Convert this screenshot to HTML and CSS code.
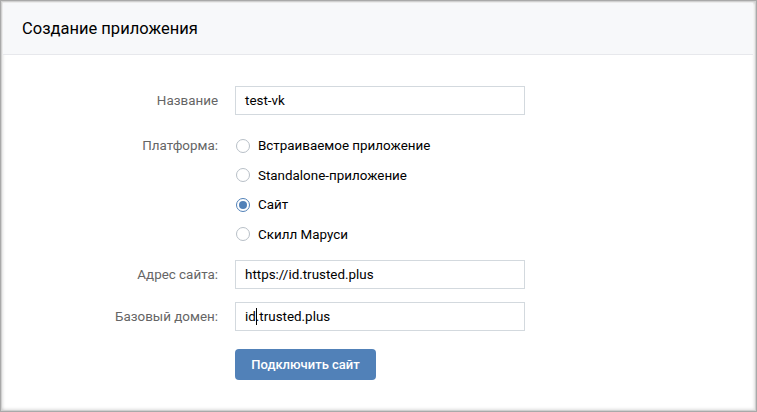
FILE: index.html
```html
<!DOCTYPE html>
<html lang="ru">
<head>
<meta charset="utf-8">
<title>Создание приложения</title>
<link rel="stylesheet" href="styles.css">
</head>
<body>
<div class="frame">
  <div class="header">Создание приложения</div>
  <div class="form">
    <div class="row row-input">
      <div class="label">Название</div>
      <div class="field"><div class="input">test-vk</div></div>
    </div>
    <div class="row row-radios">
      <div class="label label-radio">Платформа:</div>
      <div class="field radios">
        <div class="radio"><span class="circle"></span>Встраиваемое приложение</div>
        <div class="radio"><span class="circle"></span>Standalone-приложение</div>
        <div class="radio"><span class="circle on"></span>Сайт</div>
        <div class="radio"><span class="circle"></span>Скилл Маруси</div>
      </div>
    </div>
    <div class="row row-input row-addr">
      <div class="label">Адрес сайта:</div>
      <div class="field"><div class="input">https://id.trusted.plus</div></div>
    </div>
    <div class="row row-input row-domain">
      <div class="label">Базовый домен:</div>
      <div class="field"><div class="input">id<span class="caret"></span>.trusted.plus</div></div>
    </div>
    <div class="row row-button">
      <div class="label"></div>
      <div class="field"><button class="btn" type="button">Подключить сайт</button></div>
    </div>
  </div>
</div>
</body>
</html>
```
FILE: styles.css
```css
html, body {
  margin: 0;
  padding: 0;
  background: #fff;
}
body {
  font-family: Roboto, "Liberation Sans", Arial, sans-serif;
  font-size: 13.4px;
  color: #000;
}
.frame {
  width: 757px;
  height: 412px;
  box-sizing: border-box;
  border: 1px solid #a9a9a9;
  box-shadow: inset 1px 1px 0 #d0d0d0, inset -1px -1px 0 #d0d0d0, inset 2px 2px 3px rgba(0,0,0,0.12), inset -2px -2px 3px rgba(0,0,0,0.12);
  padding: 2px 3px 0 2px;
  overflow: hidden;
}
.header {
  height: 52px;
  box-sizing: border-box;
  background: #f7f8fa;
  border-bottom: 1px solid #e7e8ec;
  padding: 16px 0 0 19px;
  font-size: 16.5px;
  line-height: 20px;
  color: #000;
}
.form {
  padding-top: 31px;
}
.row {
  display: grid;
  grid-template-columns: 215px 290px;
  column-gap: 17px;
}
.label {
  text-align: right;
  color: #656565;
  line-height: 29px;
}
.input {
  height: 29px;
  box-sizing: border-box;
  border: 1px solid #d3d9de;
  padding: 0 9px;
  line-height: 27px;
  color: #000;
  background: #fff;
}
.caret {
  display: inline-block;
  width: 1px;
  height: 17px;
  background: #000;
  vertical-align: -4px;
  margin-right: -1px;
}
.row-radios {
  margin-top: 16px;
}
.label-radio {
  line-height: 29.5px;
}
.radio {
  display: flex;
  align-items: center;
  height: 29.5px;
  color: #000;
}
.circle {
  width: 14px;
  height: 14px;
  box-sizing: border-box;
  border: 1px solid #b8bfc7;
  border-radius: 50%;
  margin: 0 8px 0 1px;
  display: inline-flex;
  align-items: center;
  justify-content: center;
  flex: none;
}
.circle.on {
  border-color: #5181b8;
}
.circle.on::after {
  content: "";
  width: 8px;
  height: 8px;
  border-radius: 50%;
  background: #5181b8;
}
.row-addr {
  margin-top: 11px;
}
.row-domain {
  margin-top: 13px;
}
.row-button {
  margin-top: 18px;
}
.btn {
  width: 141px;
  height: 31px;
  border: 0;
  border-radius: 4px;
  background: #5181b8;
  color: #fff;
  font-family: Roboto, "Liberation Sans", Arial, sans-serif;
  font-size: 13px;
  font-weight: 500;
  padding: 0;
  cursor: pointer;
}
```
